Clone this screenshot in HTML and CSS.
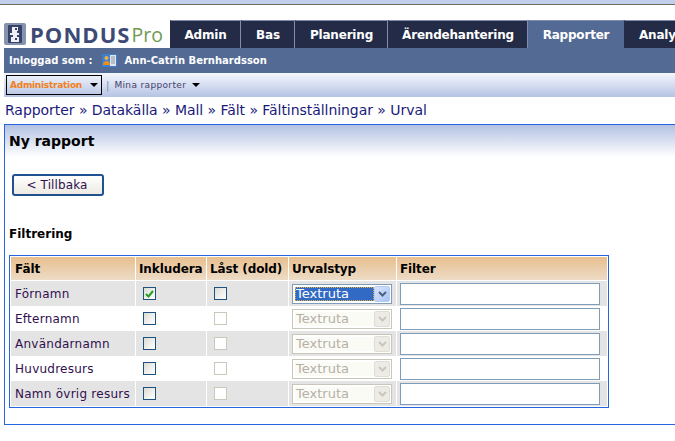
FILE: index.html
```html
<!DOCTYPE html>
<html lang="sv">
<head>
<meta charset="utf-8">
<title>Pondus Pro</title>
<link rel="stylesheet" href="styles.css">
</head>
<body>
<div class="chrome"></div>
<header class="top">
  <div class="logo">
    <svg class="logo-icon" width="22" height="22" viewBox="0 0 22 22"><rect width="22" height="22" rx="2" fill="#8593ad"/><rect x="4" y="2" width="14" height="18" rx="1" fill="#36426b"/><path d="M8 4h6v4h-1v2h2v2h-2v2h2v5H7v-5h2v-2H6v-2h2z" fill="#eef0f4"/><rect x="11" y="5" width="2" height="2" fill="#36426b"/><rect x="11" y="15" width="2" height="2" fill="#36426b"/></svg>
    <span class="logo-name">PONDUS</span><span class="logo-pro">Pro</span>
  </div>
  <nav class="tabs">
    <a class="tab t1">Admin</a>
    <a class="tab t2">Bas</a>
    <a class="tab t3">Planering</a>
    <a class="tab t4">Ärendehantering</a>
    <a class="tab t5 active">Rapporter</a>
    <a class="tab t6">Analys</a>
  </nav>
</header>
<div class="userbar">
  <span>Inloggad som :</span>
  <svg class="user-icon" width="15" height="13" viewBox="0 0 15 13"><rect width="15" height="13" rx="1" fill="#3f7fd0"/><rect x="8" y="1" width="6" height="11" fill="#dfe6ee"/><path d="M9 3h4M9 5h4M9 7h4M9 9h4" stroke="#8c97a6"/><circle cx="4.500" cy="4" r="2" fill="#f0b040"/><path d="M1 11c0-3 1.500-4 3.500-4S8 8 8 11z" fill="#e89020"/></svg>
  <span>Ann-Catrin Bernhardsson</span>
</div>
<div class="menubar">
  <div class="admin-select"><span>Administration</span><i class="caret"></i></div>
  <span class="sep">|</span>
  <span class="my-reports">Mina rapporter</span><i class="caret caret-my"></i>
</div>
<div class="crumbs">Rapporter » Datakälla » Mall » Fält » Fältinställningar » Urval</div>
<main class="panel">
  <h1 class="panel-title">Ny rapport</h1>
  <button class="back" type="button">&lt; Tillbaka</button>
  <h2 class="section">Filtrering</h2>
  <table class="grid">
    <thead>
      <tr><th class="c1">Fält</th><th class="c2">Inkludera</th><th class="c3">Låst (dold)</th><th class="c4">Urvalstyp</th><th class="c5">Filter</th></tr>
    </thead>
    <tbody>
      <tr class="odd"><td>Förnamn</td><td><span class="box on"><svg width="9" height="8" viewBox="0 0 9 8"><path d="M1 4l2.500 2.500L8 1" fill="none" stroke="#21a121" stroke-width="2"/></svg></span></td><td><span class="box"></span></td><td><div class="sel focus"><span class="sel-text">Textruta</span><span class="arrow"><svg width="9" height="6" viewBox="0 0 9 6"><path d="M1 1l3.500 3.500L8 1" fill="none" stroke="#4d6185" stroke-width="2"/></svg></span></div></td><td><div class="input"></div></td></tr>
      <tr><td>Efternamn</td><td><span class="box"></span></td><td><span class="box off"></span></td><td><div class="sel"><span class="sel-text">Textruta</span><span class="arrow"><svg width="9" height="6" viewBox="0 0 9 6"><path d="M1 1l3.500 3.500L8 1" fill="none" stroke="#c9c7ba" stroke-width="2"/></svg></span></div></td><td><div class="input"></div></td></tr>
      <tr class="odd"><td>Användarnamn</td><td><span class="box"></span></td><td><span class="box off"></span></td><td><div class="sel"><span class="sel-text">Textruta</span><span class="arrow"><svg width="9" height="6" viewBox="0 0 9 6"><path d="M1 1l3.500 3.500L8 1" fill="none" stroke="#c9c7ba" stroke-width="2"/></svg></span></div></td><td><div class="input"></div></td></tr>
      <tr><td>Huvudresurs</td><td><span class="box"></span></td><td><span class="box off"></span></td><td><div class="sel"><span class="sel-text">Textruta</span><span class="arrow"><svg width="9" height="6" viewBox="0 0 9 6"><path d="M1 1l3.500 3.500L8 1" fill="none" stroke="#c9c7ba" stroke-width="2"/></svg></span></div></td><td><div class="input"></div></td></tr>
      <tr class="odd"><td>Namn övrig resurs</td><td><span class="box"></span></td><td><span class="box off"></span></td><td><div class="sel"><span class="sel-text">Textruta</span><span class="arrow"><svg width="9" height="6" viewBox="0 0 9 6"><path d="M1 1l3.500 3.500L8 1" fill="none" stroke="#c9c7ba" stroke-width="2"/></svg></span></div></td><td><div class="input"></div></td></tr>
    </tbody>
  </table>
</main>
</body>
</html>
```

FILE: styles.css
```css
html, body { margin: 0; padding: 0; }
body { width: 675px; height: 441px; overflow: hidden; background: #fff; font-family: "DejaVu Sans", Verdana, sans-serif; color: #000; }
.chrome { height: 4px; background: #c3d0ec; border-bottom: 1px solid #6f6d58; }

.top { display: flex; align-items: flex-end; height: 43px; width: 800px; }
.logo { width: 166px; flex: none; box-sizing: border-box; padding-left: 4px; height: 28px; display: flex; align-items: center; white-space: nowrap; overflow: hidden; }
.logo-icon { flex: none; margin-right: 4px; }
.logo-name { font: 700 22px "Open Sans", sans-serif; color: #3c4a75; letter-spacing: 1.05px; }
.logo-pro { font: 400 19.500px "Open Sans", sans-serif; color: #6f9a52; margin-left: 1px; }
.tabs { display: flex; margin-left: 4px; }
.tab { box-sizing: border-box; height: 28px; display: flex; align-items: center; justify-content: center; background: #232b47; color: #fff; font-size: 12px; font-weight: 700; letter-spacing: -.2px; border: 1px solid #7f8db0; border-width: 1px 1px 0 1px; border-left-color: #232b47; white-space: nowrap; }
.t1 { width: 71px; } .t2 { width: 54px; } .t3 { width: 93px; } .t4 { width: 140px; } .t5 { width: 96px; } .t6 { width: 70px; justify-content: flex-start; padding-left: 14px; }
.tab.active { background: #526a94; border-color: #7f8db0 #526a94 #526a94; }

.userbar { margin-left: 4px; height: 25px; background: #526a94; color: #fff; font-size: 10px; font-weight: 700; display: flex; align-items: center; padding-left: 5px; }
.user-icon { margin: 0 8px 0 9px; }

.menubar { margin-left: 4px; height: 24px; background: linear-gradient(#f4f7fe, #b5c3e3); display: flex; align-items: center; padding-left: 2px; font-size: 9px; }
.admin-select { box-sizing: border-box; width: 96px; height: 20px; border: 1px solid #000; background: transparent; display: flex; align-items: center; padding-left: 3px; color: #f08020; font-weight: 700; letter-spacing: -.25px; }
.caret { width: 0; height: 0; border: 4px solid transparent; border-top: 4px solid #000; border-bottom: 0; margin-left: auto; margin-right: 3px; }
.sep { color: #7b88a8; margin: 0 5px 0 4px; font-size: 10px; }
.my-reports { color: #453f6b; letter-spacing: .35px; }
.caret-my { margin: 0 0 0 6px; }

.crumbs { height: 27px; padding-left: 5px; box-sizing: border-box; padding-top: 5px; font-size: 14px; letter-spacing: -.05px; color: #1a1a7a; white-space: nowrap; line-height: 17px; }

.panel { box-sizing: border-box; margin-left: 4px; width: 700px; height: 301px; border: 1px solid #2566e0; border-right: 0; }
.panel-title { margin: 0; height: 32px; box-sizing: border-box; padding: 8px 0 0 4px; background: linear-gradient(#b3c1e2, #fff); font-size: 14px; line-height: 16px; font-weight: 700; }
.back { display: block; box-sizing: border-box; margin: 17px 0 0 7px; width: 92px; height: 22px; padding: 0 2px 0 0; border: 2px solid #1f5291; border-radius: 3px; background: linear-gradient(#fff, #eceae2); font: 12px "DejaVu Sans", sans-serif; letter-spacing: .1px; color: #30104f; }
.section { margin: 30px 0 0 4px; font-size: 12px; line-height: 16px; height: 16px; font-weight: 700; }

.grid { margin: 13px 0 0 4px; width: 600px; table-layout: fixed; border-collapse: separate; border-spacing: 0; border: 1px solid #2566e0; padding: 1px 0 1px 1px; font-size: 12px; }
.grid th, .grid td { padding: 0; border-right: 1px solid #fff; box-sizing: border-box; }
.grid th { height: 24px; background: linear-gradient(#e8bf8f, #eddcc6); text-align: left; padding-left: 3px; font-size: 12px; letter-spacing: -.1px; color: #000; border-bottom: 1px solid #fff; white-space: nowrap; }
.grid td { height: 25px; color: #30104f; white-space: nowrap; }
.grid td:first-child { padding-left: 4px; letter-spacing: .25px; }
.grid th.c1 { width: 125px; padding-left: 4px; }
.grid th.c2 { width: 71px; }
.grid th.c3 { width: 82px; }
.grid th.c4 { width: 108px; }
.odd td { background: #e4e4e4; }
.grid td:nth-child(2) { padding-left: 7px; }
.grid td:nth-child(3) { padding-left: 7px; }
.grid td:nth-child(4) { padding-left: 3px; }
.grid td:nth-child(5) { padding-left: 3px; }

.box { box-sizing: border-box; display: flex; align-items: center; justify-content: center; width: 13px; height: 13px; border: 1px solid #1c5180; background: linear-gradient(135deg, #dcdcd6, #fff); }
.box.off { border-color: #cac8bb; background: #fff; }

.sel { box-sizing: border-box; width: 100px; height: 20px; border: 1px solid #c9c7ba; background: #fff; display: flex; align-items: center; padding: 1px; font-size: 13px; color: #b5b0a5; }
.sel-text { display: block; width: 78px; margin-left: 1px; padding-left: 1px; line-height: 14px; background: #fbfbf5; }
.arrow { display: flex; align-items: center; justify-content: center; box-sizing: border-box; width: 16px; height: 16px; margin-left: auto; background: #ecebe5; border: 1px solid #dfded6; border-radius: 2px; }
.sel.focus { border-color: #7f9db9; }
.sel.focus .sel-text { background: #316ac5; color: #fff; outline: 1px dotted #e0b040; outline-offset: -1px; }
.sel.focus .arrow { background: linear-gradient(135deg, #d8e4fb, #aac4f8); border-color: #b8cbf0; }
.input { box-sizing: border-box; width: 200px; height: 22px; border: 1px solid #7f9db9; background: #fff; }
```
